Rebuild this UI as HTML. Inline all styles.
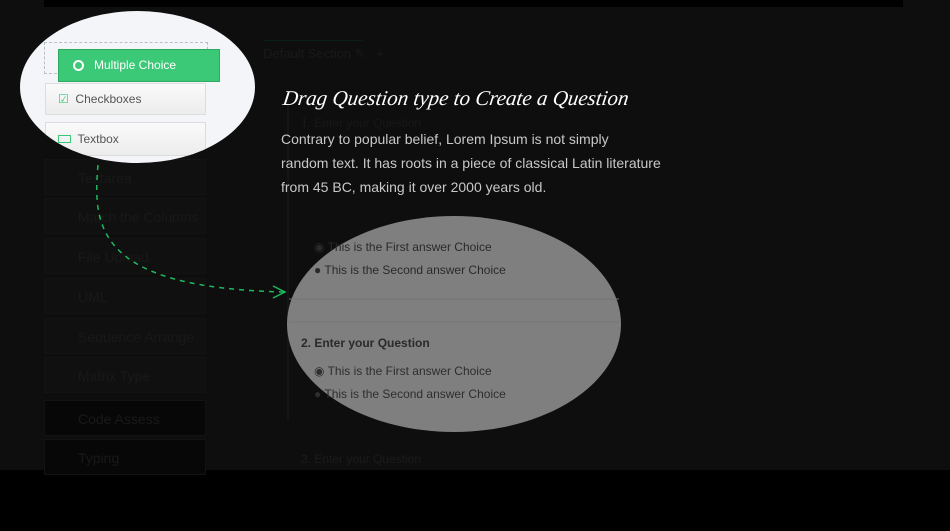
<!DOCTYPE html><html><head><style>
body{margin:0;width:950px;height:531px;background:#0e0e0e;position:relative;overflow:hidden;font-family:"Liberation Sans",sans-serif}
.a{position:absolute}
.item{position:absolute;left:44px;width:162px;height:36px;background:#101010;border:1px solid #131313;color:#191919;font-size:14px;line-height:36px;padding-left:33px;box-sizing:border-box}
</style></head><body>
<div class="a" style="left:44px;top:0;width:859px;height:7px;background:#000"></div>
<div class="a" style="left:0;top:470px;width:950px;height:61px;background:#000"></div>
<div class="a" style="left:263px;top:40px;width:100px;height:1px;background:#0a1f14"></div>
<div class="a" style="left:263px;top:46px;color:#1a1a1a;font-size:13px">Default Section ✎ &nbsp; +</div>
<div class="a" style="left:287px;top:100px;width:2px;height:320px;background:#151515"></div>
<div class="item" style="top:159px">Textarea</div>
<div class="item" style="top:198px">Match the Columns</div>
<div class="item" style="top:238px">File Upload</div>
<div class="item" style="top:278px">UML</div>
<div class="item" style="top:318px">Sequence Arrange</div>
<div class="item" style="top:357px">Matrix Type</div>
<div class="item" style="top:400px;background:#070707">Code Assess</div>
<div class="item" style="top:439px;background:#070707">Typing</div>
<div class="a" style="left:301px;top:452px;color:#1c1c1c;font-size:12px">3. Enter your Question</div>
<div class="a" style="left:301px;top:116px;color:#181818;font-size:12px">1. Enter your Question</div>
<svg class="a" style="left:0;top:0" width="950" height="470">
<path d="M98 165 C92 230 100 288 285 292" fill="none" stroke="#1fb85f" stroke-width="1.5" stroke-dasharray="5 5"/>
<path d="M273 286 L285 292 L273 298" fill="none" stroke="#1fb85f" stroke-width="1.5"/>
<ellipse cx="454" cy="324" rx="167" ry="108" fill="#7f7f7f"/>
<line x1="289" y1="299" x2="619" y2="299" stroke="#747474"/>
<line x1="289" y1="322" x2="619" y2="322" stroke="#747474"/>
</svg>
<div class="a" style="left:314px;top:236px;color:#2a2a2a;font-size:12px;line-height:23px">◉ This is the First answer Choice<br>● This is the Second answer Choice</div>
<div class="a" style="left:301px;top:336px;color:#2a2a2a;font-size:12px;font-weight:bold">2. Enter your Question</div>
<div class="a" style="left:314px;top:360px;color:#2e2e2e;font-size:12px;line-height:23px">◉ This is the First answer Choice<br>● This is the Second answer Choice</div>
<div class="a" style="left:20px;top:11px;width:235px;height:152px;border-radius:50%;overflow:hidden;background:#f4f5f8">
<div class="a" style="left:24px;top:31px;width:164px;height:32px;border:1px dashed #b8bec8;box-sizing:border-box"></div>
<div class="a" style="left:25px;top:72px;width:161px;height:32px;background:linear-gradient(#fafafa,#ececec);border:1px solid #dcdcdc;box-sizing:border-box;color:#555;font-size:12px;line-height:30px;padding-left:12px"><span style="color:#3cc977">☑</span>&nbsp; Checkboxes</div>
<div class="a" style="left:25px;top:111px;width:161px;height:34px;background:linear-gradient(#fafafa,#ececec);border:1px solid #dcdcdc;box-sizing:border-box;color:#555;font-size:12px;line-height:32px;padding-left:12px"><span style="display:inline-block;width:11px;height:6px;border:1px solid #3cc977;vertical-align:0"></span>&nbsp; Textbox</div>
</div>
<div class="a" style="left:58px;top:49px;width:162px;height:33px;background:#3cc977;border:1px solid #2daa60;box-sizing:border-box;color:#fff;font-size:12px;line-height:31px;padding-left:14px"><span style="display:inline-block;width:7px;height:7px;border:2px solid #fff;border-radius:50%;vertical-align:-2px;margin-right:10px"></span>Multiple Choice</div>
<div class="a" style="left:283px;top:86px;color:#fff;font-size:21px;font-style:italic;font-family:'Liberation Serif',serif;transform:skewX(-8deg)">Drag Question type to Create a Question</div>
<div class="a" style="left:281px;top:127px;width:400px;color:#c8c8c8;font-size:14px;line-height:24px">Contrary to popular belief, Lorem Ipsum is not simply<br>random text. It has roots in a piece of classical Latin literature<br>from 45 BC, making it over 2000 years old.</div>
</body></html>
